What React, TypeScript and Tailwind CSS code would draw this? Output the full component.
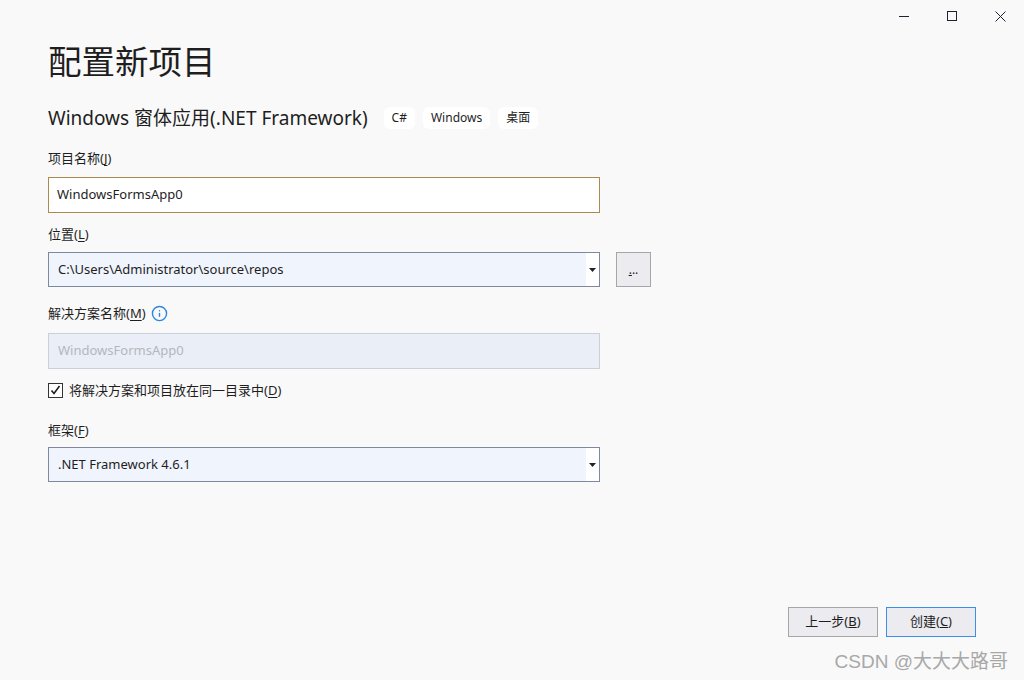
import { Info } from 'lucide-react';

function Arrow() {
    return (
        <svg width="7" height="4" viewBox="0 0 7 4" className="text-[#1e2330]">
            <path d="M0 0 H7 L3.5 4 Z" fill="currentColor" />
        </svg>
    );
}

function Label({ text, hotkey }: { text: string; hotkey: string }) {
    return (
        <div className="h-[18px] leading-[18px] text-[13px] text-[#1e1e1e]">
            {text}(<span className="underline underline-offset-2">{hotkey}</span>)
        </div>
    );
}

function ComboBox({ value }: { value: string }) {
    return (
        <div className="flex h-[35px] w-[552px] border border-[#7e899b] bg-[#f0f4fc]">
            <div className="flex-1 flex items-center pl-[9px] text-[13px] text-[#1e1e1e]">{value}</div>
            <div className="w-[13px] bg-white flex items-center justify-center pr-[1px]">
                <Arrow />
            </div>
        </div>
    );
}

export default function App() {
    return (
        <div
            className="relative w-[1024px] h-[680px] overflow-hidden bg-[#f9f9f9] flex flex-col"
            style={{ fontFamily: '"Noto Sans", "Noto Sans CJK SC", sans-serif' }}
        >
            {/* window controls */}
            <div className="flex justify-end h-[32px] shrink-0">
                <div className="w-[48px] flex items-center justify-center">
                    <div className="w-[10px] h-px bg-[#1e2330]" />
                </div>
                <div className="w-[48px] flex items-center justify-center">
                    <div className="w-[10px] h-[10px] border border-[#1e2330]" />
                </div>
                <div className="w-[48px] flex items-center justify-center">
                    <svg width="11" height="11" viewBox="0 0 11 11">
                        <path d="M0.5 0.5 L10.5 10.5 M10.5 0.5 L0.5 10.5" stroke="#1e2330" strokeWidth="1" />
                    </svg>
                </div>
            </div>

            <div className="flex flex-col pl-[48px] flex-1">
                <h1 className="mt-[7px] h-[44px] leading-[44px] text-[33.5px] text-[#1e1e1e]">配置新项目</h1>

                <div className="mt-[24px] flex items-center h-[22px] gap-[16px]">
                    <div className="text-[19px] text-[#1e1e1e] leading-[22px]">Windows 窗体应用(.NET Framework)</div>
                    <div className="flex gap-[8px]">
                        <span className="h-[22px] px-[8px] rounded-[6px] bg-white text-[12px] leading-[22px] text-[#1e1e1e]">C#</span>
                        <span className="h-[22px] px-[8px] rounded-[6px] bg-white text-[12px] leading-[22px] text-[#1e1e1e]">Windows</span>
                        <span className="h-[22px] px-[8px] rounded-[6px] bg-white text-[12px] leading-[22px] text-[#1e1e1e]">桌面</span>
                    </div>
                </div>

                <div className="mt-[20px]">
                    <Label text="项目名称" hotkey="J" />
                </div>
                <div className="mt-[10px] h-[36px] w-[552px] border border-[#a98a4f] bg-white flex items-center pl-[8px] text-[13px] text-[#1e1e1e]">
                    WindowsFormsApp0
                </div>

                <div className="mt-[12px]">
                    <Label text="位置" hotkey="L" />
                </div>
                <div className="mt-[9px] flex gap-[16px]">
                    <ComboBox value="C:\Users\Administrator\source\repos" />
                    <div className="w-[35px] h-[35px] border border-[#a6a6a6] bg-[#ecebf0] flex items-center justify-center text-[12px] text-[#1e1e1e]">
                        <span className="underline">.</span>..
                    </div>
                </div>

                <div className="mt-[17px] flex items-center gap-[5px] h-[18px]">
                    <Label text="解决方案名称" hotkey="M" />
                    <Info size={17} strokeWidth={2} className="text-[#2f86e0]" />
                </div>
                <div className="mt-[11px] h-[36px] w-[552px] border border-[#cbcfd7] bg-[#eaeef6] flex items-center pl-[9px] text-[13px] text-[#b3b7bf]">
                    WindowsFormsApp0
                </div>

                <div className="mt-[12px] flex items-center gap-[6px] h-[18px]">
                    <div className="w-[15px] h-[15px] border border-[#333333] bg-white flex items-center justify-center">
                        <svg width="11" height="10" viewBox="0 0 11 10">
                            <path d="M1.5 5.5 L4 8.5 L9.5 1" stroke="#1e1e1e" strokeWidth="1.6" fill="none" />
                        </svg>
                    </div>
                    <Label text="将解决方案和项目放在同一目录中" hotkey="D" />
                </div>

                <div className="mt-[22px]">
                    <Label text="框架" hotkey="F" />
                </div>
                <div className="mt-[8px]">
                    <ComboBox value=".NET Framework 4.6.1" />
                </div>

                <div className="mt-auto mb-[43px] mr-[48px] flex justify-end gap-[8px]">
                    <button className="w-[90px] h-[30px] border border-[#a6a6a6] bg-[#ecebf0] text-[13px] text-[#1e1e1e]">
                        上一步(<span className="underline">B</span>)
                    </button>
                    <button className="w-[90px] h-[30px] border border-[#3c8ee8] bg-[#ecebf0] text-[13px] text-[#1e1e1e]">
                        创建(<span className="underline">C</span>)
                    </button>
                </div>
            </div>

            {/* watermark */}
            <div
                className="absolute right-[16px] bottom-[6px] text-[19px] text-[#a8a8a8] leading-[24px]"
                style={{ fontFamily: '"Liberation Sans", "Noto Sans CJK SC", sans-serif' }}
            >
                CSDN @大大大路哥
            </div>
        </div>
    );
}
